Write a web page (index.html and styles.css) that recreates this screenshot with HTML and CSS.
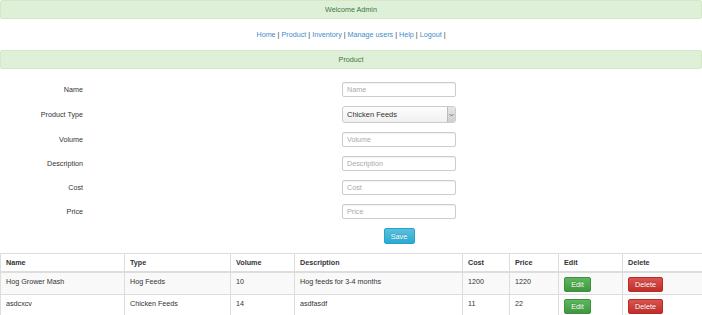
FILE: index.html
```html
<!DOCTYPE html>
<html>
  <head>
    <meta charset="UTF-8">
    <title>Product</title>
    <link rel="stylesheet" href="styles.css">
  </head>
  <body>
    <div class="bar">Welcome Admin</div>
    <nav class="menu">
      <a href="#">Home</a> | <a href="#">Product</a> | <a href="#">Inventory</a> | <a href="#">Manage users</a> | <a href="#">Help</a> | <a href="#">Logout</a> |
    </nav>
    <div class="bar">Product</div>

    <form class="product-form">
      <label>Name</label>
      <input type="text" placeholder="Name">

      <label>Product Type</label>
      <div class="select-wrap">
        <select>
          <option>Chicken Feeds</option>
          <option>Hog Feeds</option>
        </select>
        <span class="select-arrow">
          <svg width="5" height="4" viewBox="0 0 5 4"><path d="M0.5 1 L2.5 3 L4.5 1" fill="none" stroke="#666" stroke-width="0.8"/></svg>
        </span>
      </div>

      <label>Volume</label>
      <input type="text" placeholder="Volume">

      <label>Description</label>
      <input type="text" placeholder="Description">

      <label>Cost</label>
      <input type="text" placeholder="Cost">

      <label>Price</label>
      <input type="text" placeholder="Price">

      <span></span>
      <div class="save-row">
        <button type="button" class="btn btn-info">Save</button>
      </div>
    </form>

    <table class="products">
      <thead>
        <tr>
          <th>Name</th>
          <th>Type</th>
          <th>Volume</th>
          <th>Description</th>
          <th>Cost</th>
          <th>Price</th>
          <th>Edit</th>
          <th>Delete</th>
        </tr>
      </thead>
      <tbody>
        <tr>
          <td>Hog Grower Mash</td>
          <td>Hog Feeds</td>
          <td>10</td>
          <td>Hog feeds for 3-4 months</td>
          <td>1200</td>
          <td>1220</td>
          <td><button type="button" class="btn btn-success">Edit</button></td>
          <td><button type="button" class="btn btn-danger">Delete</button></td>
        </tr>
        <tr>
          <td>asdcxcv</td>
          <td>Chicken Feeds</td>
          <td>14</td>
          <td>asdfasdf</td>
          <td>11</td>
          <td>22</td>
          <td><button type="button" class="btn btn-success">Edit</button></td>
          <td><button type="button" class="btn btn-danger">Delete</button></td>
        </tr>
      </tbody>
    </table>
  </body>
</html>
```
FILE: styles.css
```css
* {
  box-sizing: border-box;
}
body {
  margin: 0;
  font-family: "Liberation Sans", Arial, sans-serif;
  font-size: 7.2px;
  color: #333;
  background: white;
}
.bar {
  height: 19px;
  line-height: 17px;
  text-align: center;
  background-color: #dff0d8;
  border: 1px solid #d6e9c6;
  border-radius: 2px;
  color: #3c763d;
}
.menu {
  height: 31px;
  line-height: 31px;
  text-align: center;
  color: #333;
}
.menu a {
  color: #428bca;
  text-decoration: none;
}
.product-form {
  display: grid;
  grid-template-columns: 83px 114px;
  column-gap: 259px;
  row-gap: 9px;
  align-items: center;
  margin-top: 13px;
}
.product-form label {
  text-align: right;
}
.product-form input {
  height: 15px;
  width: 114px;
  padding: 0 4px;
  font-family: inherit;
  font-size: 7.2px;
  color: #555;
  border: 1px solid #ccc;
  border-radius: 2px;
  box-shadow: inset 0 1px 1px rgba(0, 0, 0, 0.06);
}
.product-form input::placeholder {
  color: #aaa;
}
.select-wrap {
  position: relative;
  width: 114px;
  height: 17px;
}
.select-wrap select {
  appearance: none;
  width: 100%;
  height: 17px;
  padding: 0 4px;
  font-family: inherit;
  font-size: 7.5px;
  color: #333;
  background: linear-gradient(#fdfdfd, #f0f0f0);
  border: 1px solid #ccc;
  border-radius: 3px;
}
.select-arrow {
  position: absolute;
  top: 1px;
  right: 1px;
  width: 8px;
  height: 15px;
  display: flex;
  align-items: center;
  justify-content: center;
  background: linear-gradient(#e6e6e6, #cfcfcf);
  border-left: 1px solid #bbb;
  border-radius: 0 2px 2px 0;
}
.save-row {
  display: flex;
  justify-content: center;
}
.btn {
  display: block;
  height: 16px;
  padding: 0 6px;
  font-family: inherit;
  font-size: 7.2px;
  line-height: 13px;
  color: white;
  border-radius: 2px;
  cursor: pointer;
  text-shadow: 0 -1px 0 rgba(0, 0, 0, 0.2);
}
.btn-info {
  width: 31px;
  background: linear-gradient(#5bc0de, #2aabd2);
  border: 1px solid #28a4c9;
}
.btn-success {
  width: 27px;
  height: 15px;
  padding: 0;
  background: linear-gradient(#5cb85c, #419641);
  border: 1px solid #3e8f3e;
}
.btn-danger {
  width: 35px;
  height: 15px;
  padding: 0;
  background: linear-gradient(#d9534f, #c12e2a);
  border: 1px solid #b92c28;
}
.products {
  margin-top: 9px;
  width: 702px;
  table-layout: fixed;
  border-collapse: collapse;
  border: 1px solid #ddd;
}
.products th,
.products td {
  text-align: left;
  vertical-align: top;
  line-height: 10px;
  border: 1px solid #ddd;
}
.products th {
  height: 18px;
  padding: 4px 5px 2px;
  border-bottom-width: 2px;
  font-weight: bold;
}
.products td {
  height: 22px;
  padding: 4px 5px 2px;
}
.products tbody tr:nth-child(odd) {
  background-color: #f9f9f9;
}
.products th:nth-child(1) { width: 124px; }
.products th:nth-child(2) { width: 106px; }
.products th:nth-child(3) { width: 64px; }
.products th:nth-child(4) { width: 168px; }
.products th:nth-child(5) { width: 47px; }
.products th:nth-child(6) { width: 49px; }
.products th:nth-child(7) { width: 64px; }
.products th:nth-child(8) { width: 80px; }
```
